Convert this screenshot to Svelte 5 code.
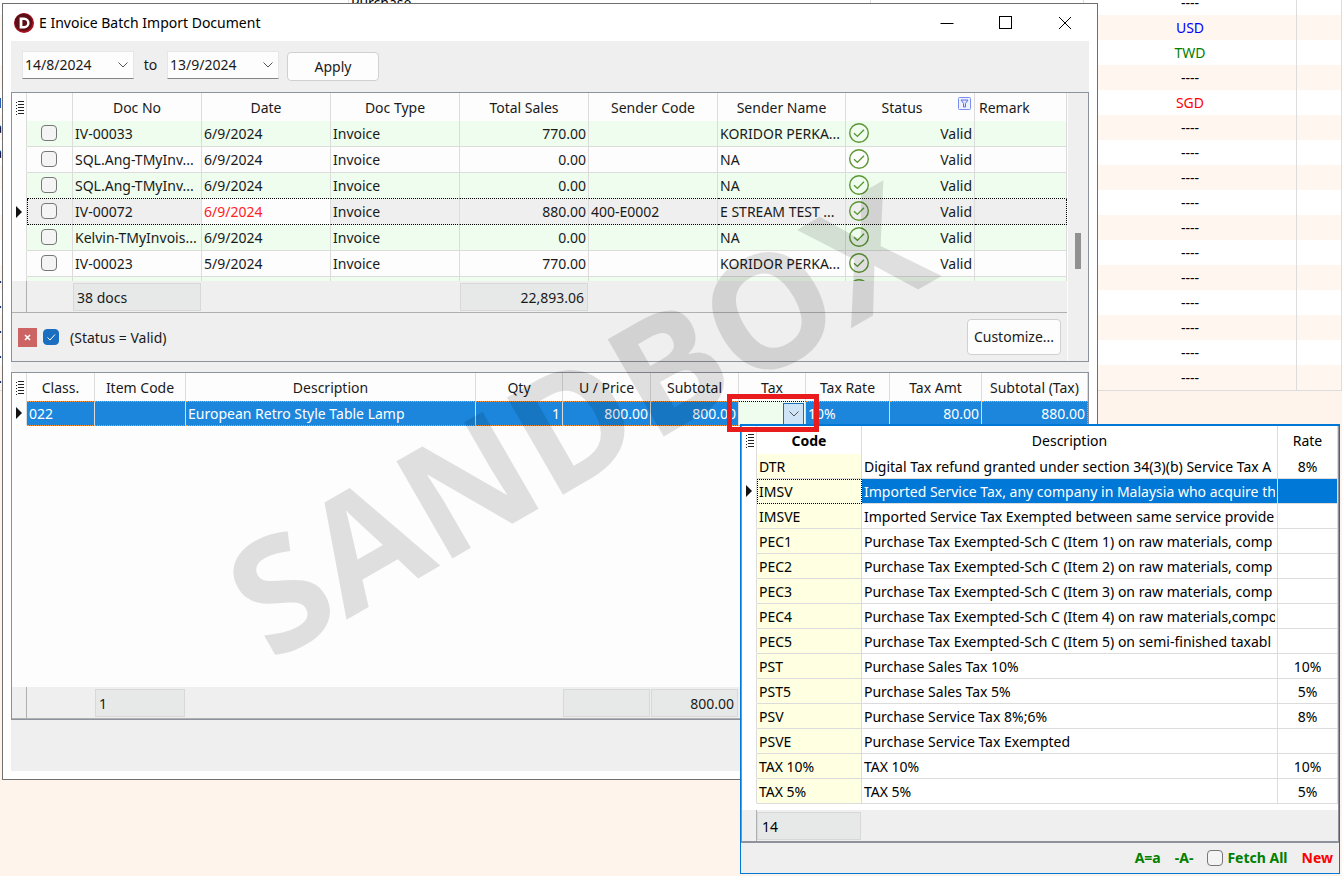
<script>
  const status = 'Valid';
  const docs = [
    { no: 'IV-00033', date: '6/9/2024', total: '770.00', code: '', name: 'KORIDOR PERKA...' },
    { no: 'SQL.Ang-TMyInv...', date: '6/9/2024', total: '0.00', code: '', name: 'NA' },
    { no: 'SQL.Ang-TMyInv...', date: '6/9/2024', total: '0.00', code: '', name: 'NA' },
    { no: 'IV-00072', date: '6/9/2024', total: '880.00', code: '400-E0002', name: 'E STREAM TEST ...', current: true },
    { no: 'Kelvin-TMyInvois...', date: '6/9/2024', total: '0.00', code: '', name: 'NA' },
    { no: 'IV-00023', date: '5/9/2024', total: '770.00', code: '', name: 'KORIDOR PERKA...' },
    { no: '', date: '', total: '', code: '', name: '', partial: true }
  ];
  const taxes = [
    ['DTR', 'Digital Tax refund granted under section 34(3)(b) Service Tax A', '8%'],
    ['IMSV', 'Imported Service Tax, any company in Malaysia who acquire th', ''],
    ['IMSVE', 'Imported Service Tax Exempted between same service provide', ''],
    ['PEC1', 'Purchase Tax Exempted-Sch C (Item 1) on raw materials, comp', ''],
    ['PEC2', 'Purchase Tax Exempted-Sch C (Item 2) on raw materials, comp', ''],
    ['PEC3', 'Purchase Tax Exempted-Sch C (Item 3) on raw materials, comp', ''],
    ['PEC4', 'Purchase Tax Exempted-Sch C (Item 4) on raw materials,compo', ''],
    ['PEC5', 'Purchase Tax Exempted-Sch C (Item 5) on semi-finished taxabl', ''],
    ['PST', 'Purchase Sales Tax 10%', '10%'],
    ['PST5', 'Purchase Sales Tax 5%', '5%'],
    ['PSV', 'Purchase Service Tax 8%;6%', '8%'],
    ['PSVE', 'Purchase Service Tax Exempted', ''],
    ['TAX 10%', 'TAX 10%', '10%'],
    ['TAX 5%', 'TAX 5%', '5%']
  ];
  const currencies = ['----', 'USD', 'TWD', '----', 'SGD', ...Array(11).fill('----')];
  const edge = { 4: 'M', 5: 'a', 6: 'a', 11: '.', 12: '.', 13: '.', 14: '.', 15: '.' };
</script>

{#snippet menuGlyph()}
  <svg class="menu-glyph" width="8" height="14" viewBox="0 0 8 14" aria-hidden="true">
    <path d="M0 1.5h1M0 4.5h1M0 7.5h1M0 10.5h1M0 13.5h1M2 .5h6M2 3.5h6M2 6.5h6M2 9.5h6M2 12.5h6" stroke="#222" fill="none" />
  </svg>
{/snippet}

{#snippet pointer()}
  <svg class="pointer" width="6" height="12" viewBox="0 0 6 12" aria-hidden="true"><path d="M0 0 6 6 0 12Z" fill="#111" /></svg>
{/snippet}

{#snippet chevron()}
  <svg class="chevron" width="10" height="6" viewBox="0 0 10 6" aria-hidden="true"><path d="M.5.5 5 5 9.5.5" stroke="#555" fill="none" /></svg>
{/snippet}

{#snippet tick()}
  <svg class="tick" width="20" height="20" viewBox="0 0 20 20" aria-hidden="true">
    <circle cx="10" cy="10" r="9.3" stroke="#5a9632" stroke-width="1.4" fill="none" />
    <path d="M5 10.3 8.4 13.4 15 6.8" stroke="#5a9632" stroke-width="1.4" fill="none" />
  </svg>
{/snippet}

<main class="desktop">
  <table class="backdrop">
    <colgroup><col class="b-edge" /><col class="b-fill" /><col /><col class="b-cur" /><col class="b-cur" /><col class="b-end" /></colgroup>
    <tbody>
      {#each currencies as c, i}
        <tr><td><span>{edge[i] ?? ''}</span></td><td></td><td>{i === 0 ? 'Purchase' : ''}</td><td></td><td class={c === '----' ? 'none' : c.toLowerCase()}>{c}</td><td></td></tr>
      {/each}
    </tbody>
  </table>

  <section class="window" aria-label="E Invoice Batch Import Document">
    <header class="titlebar">
      <svg width="20" height="20" viewBox="0 0 20 20" aria-hidden="true">
        <circle cx="10" cy="10" r="10" fill="#a51420" />
        <circle cx="9.5" cy="9.2" r="8.8" fill="#5c1016" />
        <path d="M5.6 4.6h4.6a5.4 5.4 0 0 1 0 10.8H5.6Z M8.4 7v6h1.7a3 3 0 0 0 0-6Z" fill="#fff" fill-rule="evenodd" />
      </svg>
      <h1>E Invoice Batch Import Document</h1>
      <div class="controls">
        <button aria-label="Minimize"><svg width="14" height="14" viewBox="0 0 14 14"><path d="M.5 7.5h13" stroke="#000" /></svg></button>
        <button aria-label="Maximize"><svg width="14" height="14" viewBox="0 0 14 14"><rect x=".5" y=".5" width="12" height="12" fill="none" stroke="#000" /></svg></button>
        <button aria-label="Close"><svg width="14" height="14" viewBox="0 0 14 14"><path d="M1 1 13 13M13 1 1 13" stroke="#000" fill="none" /></svg></button>
      </div>
    </header>

    <div class="client">
      <form class="toolbar" onsubmit={(e) => e.preventDefault()}>
        <span class="combo"><input id="from" value="14/8/2024" aria-label="From date" />{@render chevron()}</span>
        <label for="to">to</label>
        <span class="combo"><input id="to" value="13/9/2024" />{@render chevron()}</span>
        <button class="btn apply">Apply</button>
      </form>

      <section class="grid docs">
        <div class="docs-main">
          <div class="docs-rows">
            <table>
              <colgroup><col class="w-ind" /><col class="w-chk" /><col class="w-std" /><col class="w-std" /><col class="w-std" /><col class="w-std" /><col class="w-std" /><col class="w-name" /><col class="w-std" /><col /></colgroup>
              <thead>
                <tr>
                  <th>{@render menuGlyph()}</th><th></th><th>Doc No</th><th>Date</th><th>Doc Type</th><th>Total Sales</th><th>Sender Code</th><th>Sender Name</th>
                  <th><span class="filtered"><span>Status</span>
                    <svg width="13" height="13" viewBox="0 0 13 13" aria-hidden="true"><rect x=".5" y=".5" width="12" height="12" rx="1" fill="#eef2ff" stroke="#7b8ff0" /><path d="M3 3h7L7.5 6.5V10h-2V6.5Z" fill="#dfe5ff" stroke="#5a70e8" /></svg></span></th>
                  <th class="left">Remark</th>
                </tr>
              </thead>
              <tbody>
                {#each docs as d}
                  <tr class:current={d.current}>
                    <td>{#if d.current}{@render pointer()}{/if}</td>
                    <td class="pick">{#if !d.partial}<input type="checkbox" aria-label={`Select ${d.no}`} />{/if}</td>
                    <td>{d.no}</td>
                    <td class="date">{d.date}</td>
                    <td>{d.partial ? '' : 'Invoice'}</td>
                    <td class="num">{d.total}</td>
                    <td>{d.code}</td>
                    <td>{d.name}</td>
                    <td class="state"><span class="status">{@render tick()}<span>{d.partial ? '' : status}</span></span></td>
                    <td></td>
                  </tr>
                {/each}
              </tbody>
            </table>
          </div>
          <div class="summary s-docs"><span></span><span></span><output>38 docs</output><span></span><span></span><output class="num">22,893.06</output></div>
          <div class="filterbar">
            <button class="clear" aria-label="Clear filter"><svg width="7" height="7" viewBox="0 0 7 7"><path d="M1 1 6 6M6 1 1 6" stroke="#fff" stroke-width="1.6" /></svg></button>
            <input id="flt" type="checkbox" checked />
            <label for="flt">(Status = Valid)</label>
            <button class="btn customize">Customize...</button>
          </div>
        </div>
        <div class="scroll"><span></span></div>
      </section>

      <section class="grid lines">
        <table>
          <colgroup><col class="w-ind" /><col class="l-class" /><col class="l-item" /><col /><col class="l-qty" /><col class="l-amt" /><col class="l-amt" /><col class="l-tax" /><col class="l-rate" /><col class="l-tamt" /><col class="l-sub" /></colgroup>
          <thead>
            <tr><th>{@render menuGlyph()}</th><th>Class.</th><th>Item Code</th><th>Description</th><th>Qty</th><th>U / Price</th><th>Subtotal</th><th>Tax</th><th>Tax Rate</th><th>Tax Amt</th><th>Subtotal (Tax)</th></tr>
          </thead>
          <tbody>
            <tr>
              <td>{@render pointer()}</td><td>022</td><td></td><td>European Retro Style Table Lamp</td><td class="num">1</td><td class="num">800.00</td><td class="num">800.00</td>
              <td class="editor"><button aria-label="Choose tax">{@render chevron()}</button></td>
              <td>10%</td><td class="num">80.00</td><td class="num">880.00</td>
            </tr>
          </tbody>
        </table>
        <div class="summary s-lines"><span></span><span></span><output>1</output><span></span><span></span><output></output><output class="num">800.00</output></div>
      </section>
    </div>
    <div class="watermark" aria-hidden="true">SANDBOX</div>
  </section>

  <section class="popup" aria-label="Tax codes">
    <div class="grid picker">
      <table>
        <colgroup><col class="w-ind" /><col class="p-code" /><col /><col class="p-rate" /></colgroup>
        <thead><tr><th>{@render menuGlyph()}</th><th class="sorted">Code</th><th>Description</th><th>Rate</th></tr></thead>
        <tbody>
          {#each taxes as [code, text, rate]}
            <tr class:current={code === 'IMSV'}>
              <td>{#if code === 'IMSV'}{@render pointer()}{/if}</td><td class="code">{code}</td><td><span class="clip">{text}</span></td><td class="center">{rate}</td>
            </tr>
          {/each}
        </tbody>
      </table>
      <div class="summary s-tax"><span></span><output>14</output></div>
    </div>
    <footer>
      <button>A=a</button>
      <button>-A-</button>
      <span class="fetch"><input id="all" type="checkbox" /><label for="all">Fetch All</label></span>
      <button class="new">New</button>
    </footer>
  </section>

  <div class="highlight"></div>
</main>

<style>
  :global(body) { margin: 0; background: #fff4eb; overflow: hidden; }
  .desktop { position: relative; height: 100vh; overflow: hidden; font: 14px/20px "Noto Sans", "Open Sans", sans-serif; color: #1a1a1a; }
  .desktop * { box-sizing: border-box; }
  button, input { font: inherit; color: inherit; margin: 0; }
  h1 { font: inherit; color: #000; margin: 0; }
  table { border-collapse: separate; border-spacing: 0; table-layout: fixed; width: 100%; }
  th { font-weight: 400; padding: 0; }
  td { padding: 0 2px; white-space: nowrap; overflow: hidden; }
  svg { display: block; flex: none; }

  .backdrop { margin-top: -10px; background: #fff; border-bottom: 1px solid #dcdcdc; color: #000; }
  .backdrop td { height: 25px; border-right: 1px solid #dcdcdc; }
  .backdrop td:first-child { padding: 0; border: 0; }
  .backdrop td:first-child span { display: flex; justify-content: flex-end; width: 2px; }
  .backdrop tr:nth-child(even) td { background: #fff6ef; }
  .backdrop td:nth-child(5) { text-align: center; }
  .b-edge { width: 3px; } .b-fill { width: 346px; } .b-cur { width: 213px; } .b-end { width: 45px; }
  .usd { color: #00f; } .twd { color: #008000; } .sgd { color: #f00; }

  .window { position: absolute; left: 2px; right: 244px; top: 3px; bottom: 96px; background: #fff; border: 1px solid #6f6f6f; padding: 0 8px 8px; display: flex; flex-direction: column; }
  .titlebar { height: 37px; flex: none; display: flex; align-items: center; gap: 5px; padding-left: 3px; }
  .controls { margin-left: auto; display: flex; gap: 45px; padding-right: 17px; }
  .controls button { border: 0; background: none; padding: 0; }
  .client { flex: 1; min-height: 0; background: #efefef; display: flex; flex-direction: column; }
  .toolbar { height: 51px; flex: none; display: flex; align-items: center; padding: 0 11px; }
  .toolbar label { width: 33px; text-align: center; padding-bottom: 4px; }
  .combo { display: flex; align-items: center; width: 112px; height: 28px; margin-bottom: 3px; background: #fdfdfd; border: 1px solid #e6e6e6; border-bottom-color: #868686; padding: 0 5px 0 2px; }
  .combo input { flex: 1; min-width: 0; border: 0; padding: 0; background: none; outline: 0; }
  .btn { background: #fdfdfd; border: 1px solid #d0d0d0; border-radius: 4px; padding: 0; text-align: center; }
  .apply { width: 92px; height: 29px; margin-left: 8px; }

  .grid { border: 1px solid #8e929c; background: #fdfdfd; }
  .grid th { height: 28px; padding-top: 1px; border-right: 1px solid #dcdcdc; background: #fdfdfd; }
  .grid td { border-right: 1px solid #dcdcdc; border-bottom: 1px solid #dcdcdc; }
  .grid td:first-child { border-bottom-color: transparent; padding: 0 0 0 4px; }
  .grid .left { text-align: left; padding-left: 4px; }
  .menu-glyph { margin-left: 4px; }
  .num { text-align: right; }
  .center { text-align: center; }
  .w-ind { width: 15px; }

  input[type="checkbox"] { appearance: none; width: 16px; height: 16px; border: 1px solid #777; border-radius: 4px; background: #f4f4f4; display: block; flex: none; }

  .docs { display: flex; flex: none; height: 270px; }
  .docs-main { flex: 1; min-width: 0; display: flex; flex-direction: column; border-right: 1px solid #fdfdfd; background: #efefef; }
  .docs-rows { height: 188px; overflow: hidden; background: #fdfdfd; }
  .docs td { height: 26px; }
  .docs tbody tr:nth-child(odd) td:not(:first-child) { background: #eefdee; }
  .docs tbody tr.current td:not(:first-child) { background: #efefef; border-bottom: 1px dotted #000; }
  .docs tbody tr:nth-child(3) td:not(:first-child) { border-bottom: 1px dotted #000; }
  .docs tbody tr.current td.date { background: #fdfdfd; color: #f22; }
  .docs tr.current td:nth-child(2) { border-left: 1px dotted #000; padding-left: 13px; }
  .docs tr.current td:last-child { border-right: 1px dotted #000; }
  .docs .pick { padding: 0 0 2px 14px; }
  .docs .state { padding: 0 2px 0 3px; }
  .w-chk { width: 46px; } .w-std { width: 129px; } .w-name { width: 128px; }
  .status { display: flex; justify-content: space-between; align-items: center; }
  .status svg { margin-bottom: 2px; }
  .filtered { display: grid; grid-template-columns: 1fr 13px; align-items: center; padding-right: 3px; }
  .filtered svg { margin-bottom: 8px; }

  .summary { display: grid; height: 32px; flex: none; background: #efefef; border-bottom: 1px solid #b0b0b0; }
  .summary span:first-child { border-right: 1px solid #b0b0b0; }
  .summary output { height: 28px; margin: 2px 1px 0 0; background: #e7e9e8; border: 1px solid #d8d8d8; padding: 0 3px; line-height: 28px; }
  .s-docs { grid-template-columns: 15px 46px 129px 129px 129px 129px 1fr; }
  .s-lines { grid-template-columns: 15px 68px 91px 1fr 87px 88px 88px 349px; margin-top: auto; }
  .s-tax { grid-template-columns: 15px 105px 1fr; }
  .filterbar { flex: 1; display: flex; align-items: center; padding: 0 6px; }
  .clear { width: 19px; height: 19px; padding: 0; border: 0; background: #cc6464; display: grid; place-items: center; margin-right: 6px; }
  .filterbar label { padding-top: 1px; }
  .filterbar input { background: #1a6fc0 url("data:image/svg+xml,%3Csvg xmlns='http://www.w3.org/2000/svg' viewBox='0 0 14 14'%3E%3Cpath d='M3.5 7.5 6 10l5-5.5' fill='none' stroke='white'/%3E%3C/svg%3E"); border-color: #1a6fc0; margin-right: 11px; }
  .customize { margin-left: auto; width: 94px; height: 36px; }
  .scroll { width: 20px; background: #efefef; padding-top: 140px; }
  .scroll span { display: block; width: 6px; height: 36px; margin: 0 auto; background: #919191; }

  .lines { flex: none; margin-top: 10px; height: 348px; display: flex; flex-direction: column; }
  .lines td { height: 25px; }
  .lines td:not(:first-child) { background: #1b86dc; color: #fff; border-top: 1px dotted #ff9a3c; border-bottom: 1px dotted #ff9a3c; }
  .lines td:last-child { border-right: 1px dotted #ff9a3c; }
  .lines td.editor { background: #eefdee; padding: 0; border-top-color: #000; }
  .editor button { display: grid; place-items: center; width: 21px; height: 22px; margin-left: auto; margin-right: 1px; padding: 0; background: #cfe5f7; border: 1px solid #1b6fc0; }
  .l-class { width: 68px; } .l-item { width: 91px; } .l-qty { width: 87px; } .l-amt { width: 88px; } .l-tax { width: 67px; } .l-rate { width: 84px; } .l-tamt { width: 92px; } .l-sub { width: 106px; }

  .watermark { position: absolute; left: 268px; top: 518px; font: bold 157px/160px "Open Sans", "Noto Sans", sans-serif; color: #000; opacity: 0.115; transform: rotate(-30deg); transform-origin: 0 140px; pointer-events: none; }

  .popup { position: absolute; left: 740px; right: 2px; top: 424px; bottom: 2px; border: 1px solid #0078d7; border-top-width: 2px; background: #efefef; display: flex; flex-direction: column; color: #000; }
  .picker { display: flex; flex-direction: column; flex: 1; background: #fff; border-top: 0; border-bottom-width: 2px; }
  .picker th { background: #fff; padding-top: 2px; }
  .picker td { height: 25px; padding-top: 1px; }
  .picker .code { background: #ffffe1; }
  .clip { display: block; overflow: hidden; }
  .picker .sorted { font-weight: 700; }
  .picker tr.current td:nth-child(n + 3) { background: #0078d7; color: #fff; }
  .picker tr.current td.code { border: 1px dotted #000; padding-top: 0; padding-left: 1px; }
  .picker .summary { margin-top: auto; border-bottom: 0; height: 31px; }
  .picker output { padding: 0 4px; }
  .p-code { width: 105px; } .p-rate { width: 60px; }
  .popup footer { height: 30px; display: flex; align-items: center; justify-content: flex-end; gap: 14px; padding-right: 6px; font-weight: 700; color: #008000; }
  .popup footer button { border: 0; padding: 0; background: none; font-weight: 700; }
  .popup .new { color: #f00; }
  .fetch { display: flex; align-items: center; gap: 4px; }

  .highlight { position: absolute; left: 727px; top: 394px; width: 92px; height: 38px; border: 5px solid #e81c1c; pointer-events: none; }
</style>
